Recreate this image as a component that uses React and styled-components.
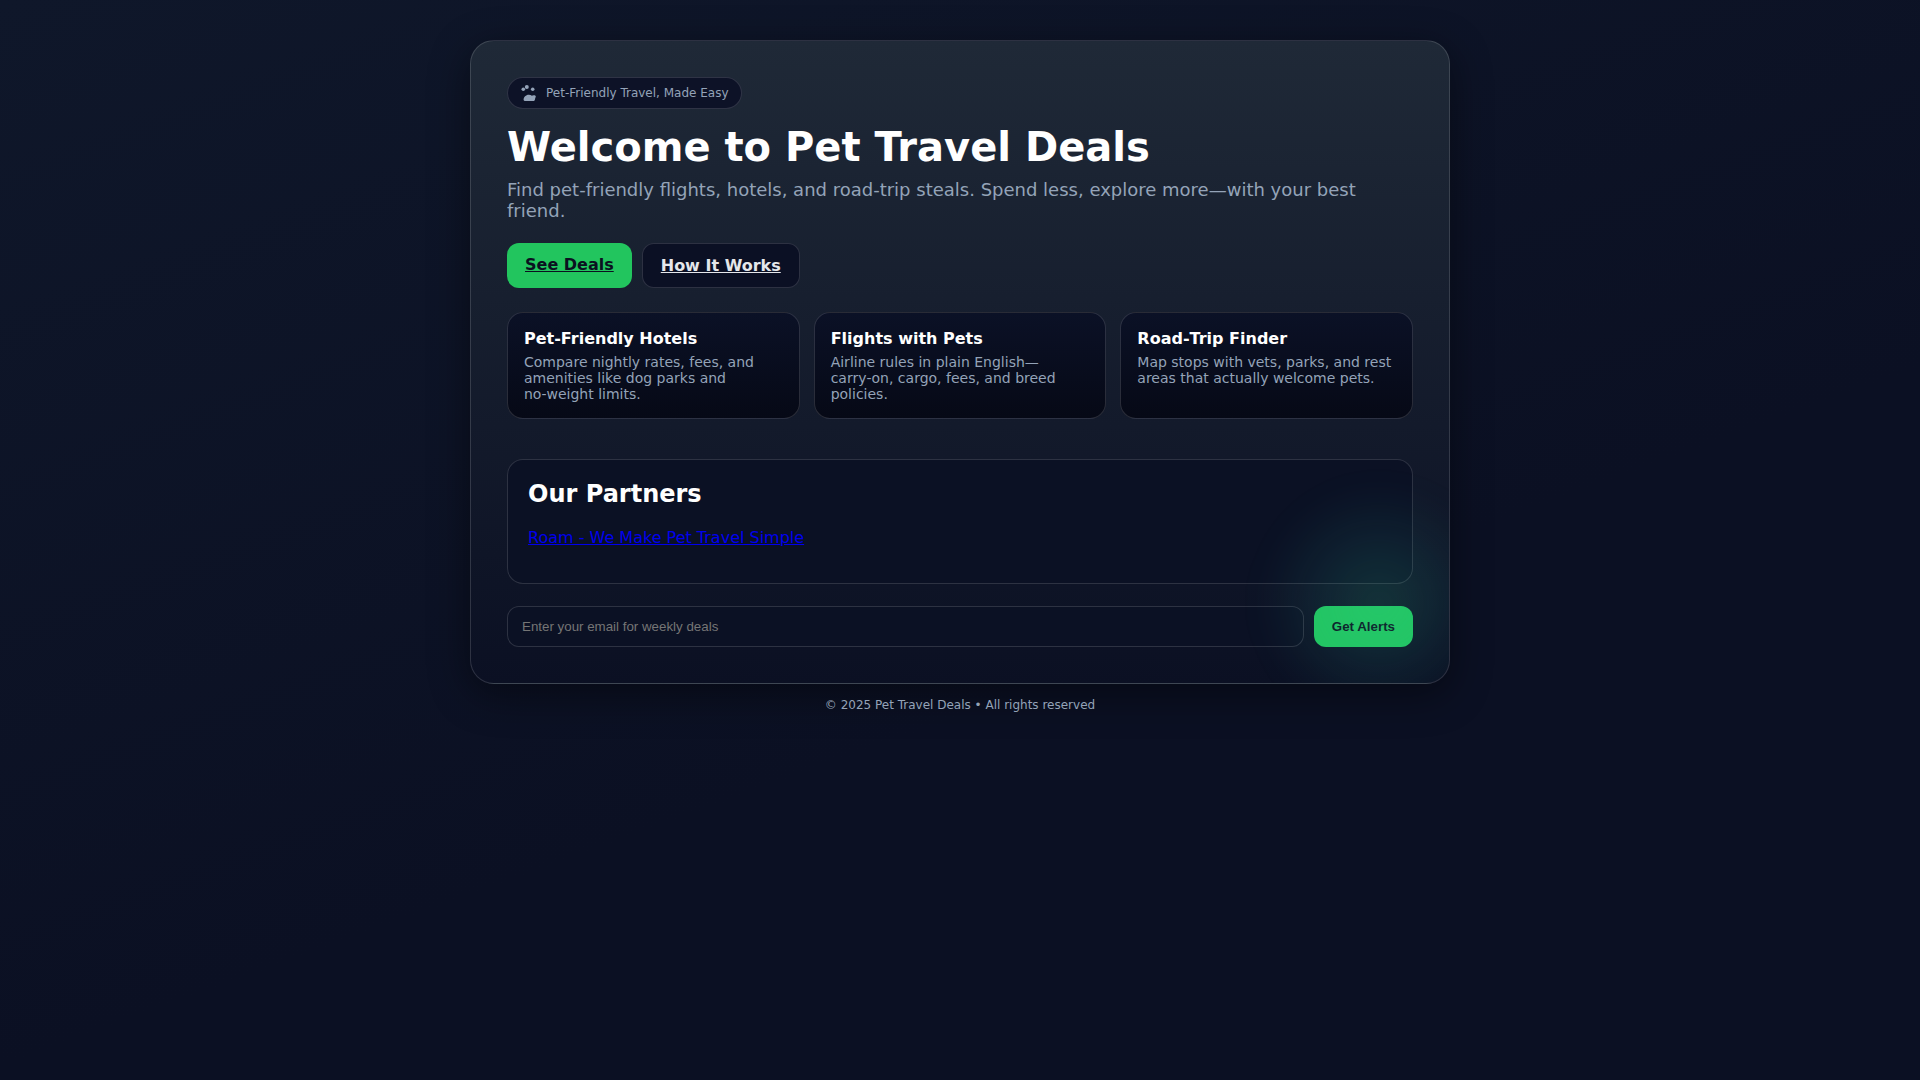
import React from "react";
import styled, { createGlobalStyle } from "styled-components";

const GlobalStyle = createGlobalStyle`
  * { box-sizing: border-box; }
  body {
    margin: 0;
    min-height: 100vh;
    font-family: "DejaVu Sans", sans-serif;
    font-size: 16px;
    color: #e5e7eb;
    background: linear-gradient(160deg, #0f172a 0%, #0b1023 60%);
  }
`;

const Page = styled.div`
  max-width: 980px;
  margin: 0 auto;
  padding: 40px 0;
`;

const HeroShadow = styled.div`
  border-radius: 24px;
  box-shadow: 0 10px 40px rgba(0, 0, 0, 0.45);
`;

const Hero = styled.main`
  position: relative;
  overflow: hidden;
  padding: 36px;
  border: 1px solid rgba(255, 255, 255, 0.14);
  border-radius: 24px;
  background: linear-gradient(180deg, #1f2937 0%, #0b1023 100%);
`;

const Glow = styled.div`
  position: absolute;
  right: -50px;
  bottom: -40px;
  width: 240px;
  height: 240px;
  background: radial-gradient(
    closest-side,
    rgba(52, 211, 153, 0.18),
    rgba(48, 200, 180, 0.09) 50%,
    transparent
  );
  filter: blur(16px);
  pointer-events: none;
`;

const Badge = styled.div`
  display: inline-flex;
  align-items: center;
  gap: 8px;
  padding: 6px 12px;
  border: 1px solid rgba(255, 255, 255, 0.14);
  border-radius: 999px;
  background: #0d1227;
  color: #94a3b8;
  font-size: 12px;
  vertical-align: top;
`;

const Title = styled.h1`
  margin: 14px 0 8px;
  font-size: 40px;
  line-height: 48px;
  color: #fff;
`;

const Lead = styled.p`
  margin: 0 0 22px;
  font-size: 18px;
  line-height: 21px;
  color: #94a3b8;
`;

const Actions = styled.div`
  display: flex;
  flex-wrap: wrap;
  gap: 10px;
`;

const ActionLink = styled.a`
  padding: 12px 18px;
  border: ${(p) => (p.$primary ? "0" : "1px solid rgba(255, 255, 255, 0.14)")};
  border-radius: 12px;
  background: ${(p) => (p.$primary ? "#22c55e" : "#0b1024")};
  color: ${(p) => (p.$primary ? "#0b1020" : "#e5e7eb")};
  font-weight: 700;
  line-height: 19px;
`;

const Features = styled.section`
  display: grid;
  grid-template-columns: repeat(3, 1fr);
  gap: 14px;
  margin-top: 24px;
`;

const Feature = styled.article`
  padding: 16px;
  border: 1px solid rgba(255, 255, 255, 0.14);
  border-radius: 16px;
  background: linear-gradient(180deg, #0b1126, #060916);
`;

const FeatureTitle = styled.h3`
  margin: 0 0 6px;
  font-size: 16px;
  line-height: 19px;
  color: #fff;
`;

const FeatureText = styled.p`
  margin: 0;
  font-size: 14px;
  line-height: 16px;
  color: #94a3b8;
`;

const Partners = styled.section`
  margin-top: 40px;
  padding: 20px;
  border: 1px solid rgba(255, 255, 255, 0.14);
  border-radius: 16px;
  background: #0b1124;
`;

const PartnersTitle = styled.h2`
  margin: 0 0 20px;
  font-size: 24px;
  line-height: 28px;
  color: #fff;
`;

const PartnerItem = styled.p`
  margin: 0 0 16px;
  line-height: 19px;
`;

const PartnerLink = styled.a`
  color: #0000ee;
`;

const Signup = styled.form`
  display: flex;
  gap: 10px;
  margin-top: 22px;
`;

const EmailInput = styled.input`
  flex: 1;
  min-width: 0;
  padding: 12px 14px;
  border: 1px solid rgba(255, 255, 255, 0.14);
  border-radius: 12px;
  background: #0b1124;
  color: #e5e7eb;
  font-family: "Liberation Sans", sans-serif;
  &::placeholder { color: #757575; }
`;

const SubmitButton = styled.button`
  padding: 13px 18px;
  border: 0;
  border-radius: 12px;
  background: #22c55e;
  color: #0b1020;
  font-family: "Liberation Sans", sans-serif;
  font-weight: 700;
`;

const Footer = styled.footer`
  margin-top: 14px;
  text-align: center;
  font-size: 12px;
  line-height: 14px;
  color: #94a3b8;
`;

const features = [
  {
    title: "Pet\u2011Friendly Hotels",
    text: "Compare nightly rates, fees, and amenities like dog parks and no\u2011weight limits.",
  },
  {
    title: "Flights with Pets",
    text: "Airline rules in plain English\u2014carry\u2011on, cargo, fees, and breed policies.",
  },
  {
    title: "Road\u2011Trip Finder",
    text: "Map stops with vets, parks, and rest areas that actually welcome pets.",
  },
];

function PawIcon() {
  return (
    <svg width="18" height="18" viewBox="0 0 18 18" fill="currentColor" aria-hidden="true">
      <circle cx="3.3" cy="5.3" r="1.8" />
      <circle cx="6.8" cy="3" r="2" />
      <circle cx="12.7" cy="5.3" r="1.8" />
      <path d="M3.600 15.600c0-2.400 2.200-4.800 5.200-4.800 1.400 0 2.400.300 3 .900.900-.700 4-.900 4 .900 0 .900-.500 1.300-.700 2.100-.100.900-.500 2.200-1.400 2.200H4.800c-.800 0-1.200-.600-1.200-1.300z" />
    </svg>
  );
}

export default function App() {
  return (
    <>
      <GlobalStyle />
      <Page>
        <HeroShadow>
          <Hero>
            <Badge>
              <PawIcon />
              <span>Pet-Friendly Travel, Made Easy</span>
            </Badge>
            <Title>Welcome to Pet Travel Deals</Title>
            <Lead>
              Find pet-friendly flights, hotels, and road-trip steals. Spend less, explore
              more—with your best friend.
            </Lead>
            <Actions>
              <ActionLink href="#deals" $primary>See Deals</ActionLink>
              <ActionLink href="#how">How It Works</ActionLink>
            </Actions>
            <Features id="how">
              {features.map((f) => (
                <Feature key={f.title}>
                  <FeatureTitle>{f.title}</FeatureTitle>
                  <FeatureText>{f.text}</FeatureText>
                </Feature>
              ))}
            </Features>
            <Partners id="deals">
              <PartnersTitle>Our Partners</PartnersTitle>
              <PartnerItem>
                <PartnerLink href="#roam">Roam - We Make Pet Travel Simple</PartnerLink>
              </PartnerItem>
            </Partners>
            <Signup onSubmit={(e) => e.preventDefault()}>
              <EmailInput
                type="email"
                aria-label="Email address"
                placeholder="Enter your email for weekly deals"
              />
              <SubmitButton type="submit">Get Alerts</SubmitButton>
            </Signup>
            <Glow />
          </Hero>
        </HeroShadow>
        <Footer>© 2025 Pet Travel Deals • All rights reserved</Footer>
      </Page>
    </>
  );
}
